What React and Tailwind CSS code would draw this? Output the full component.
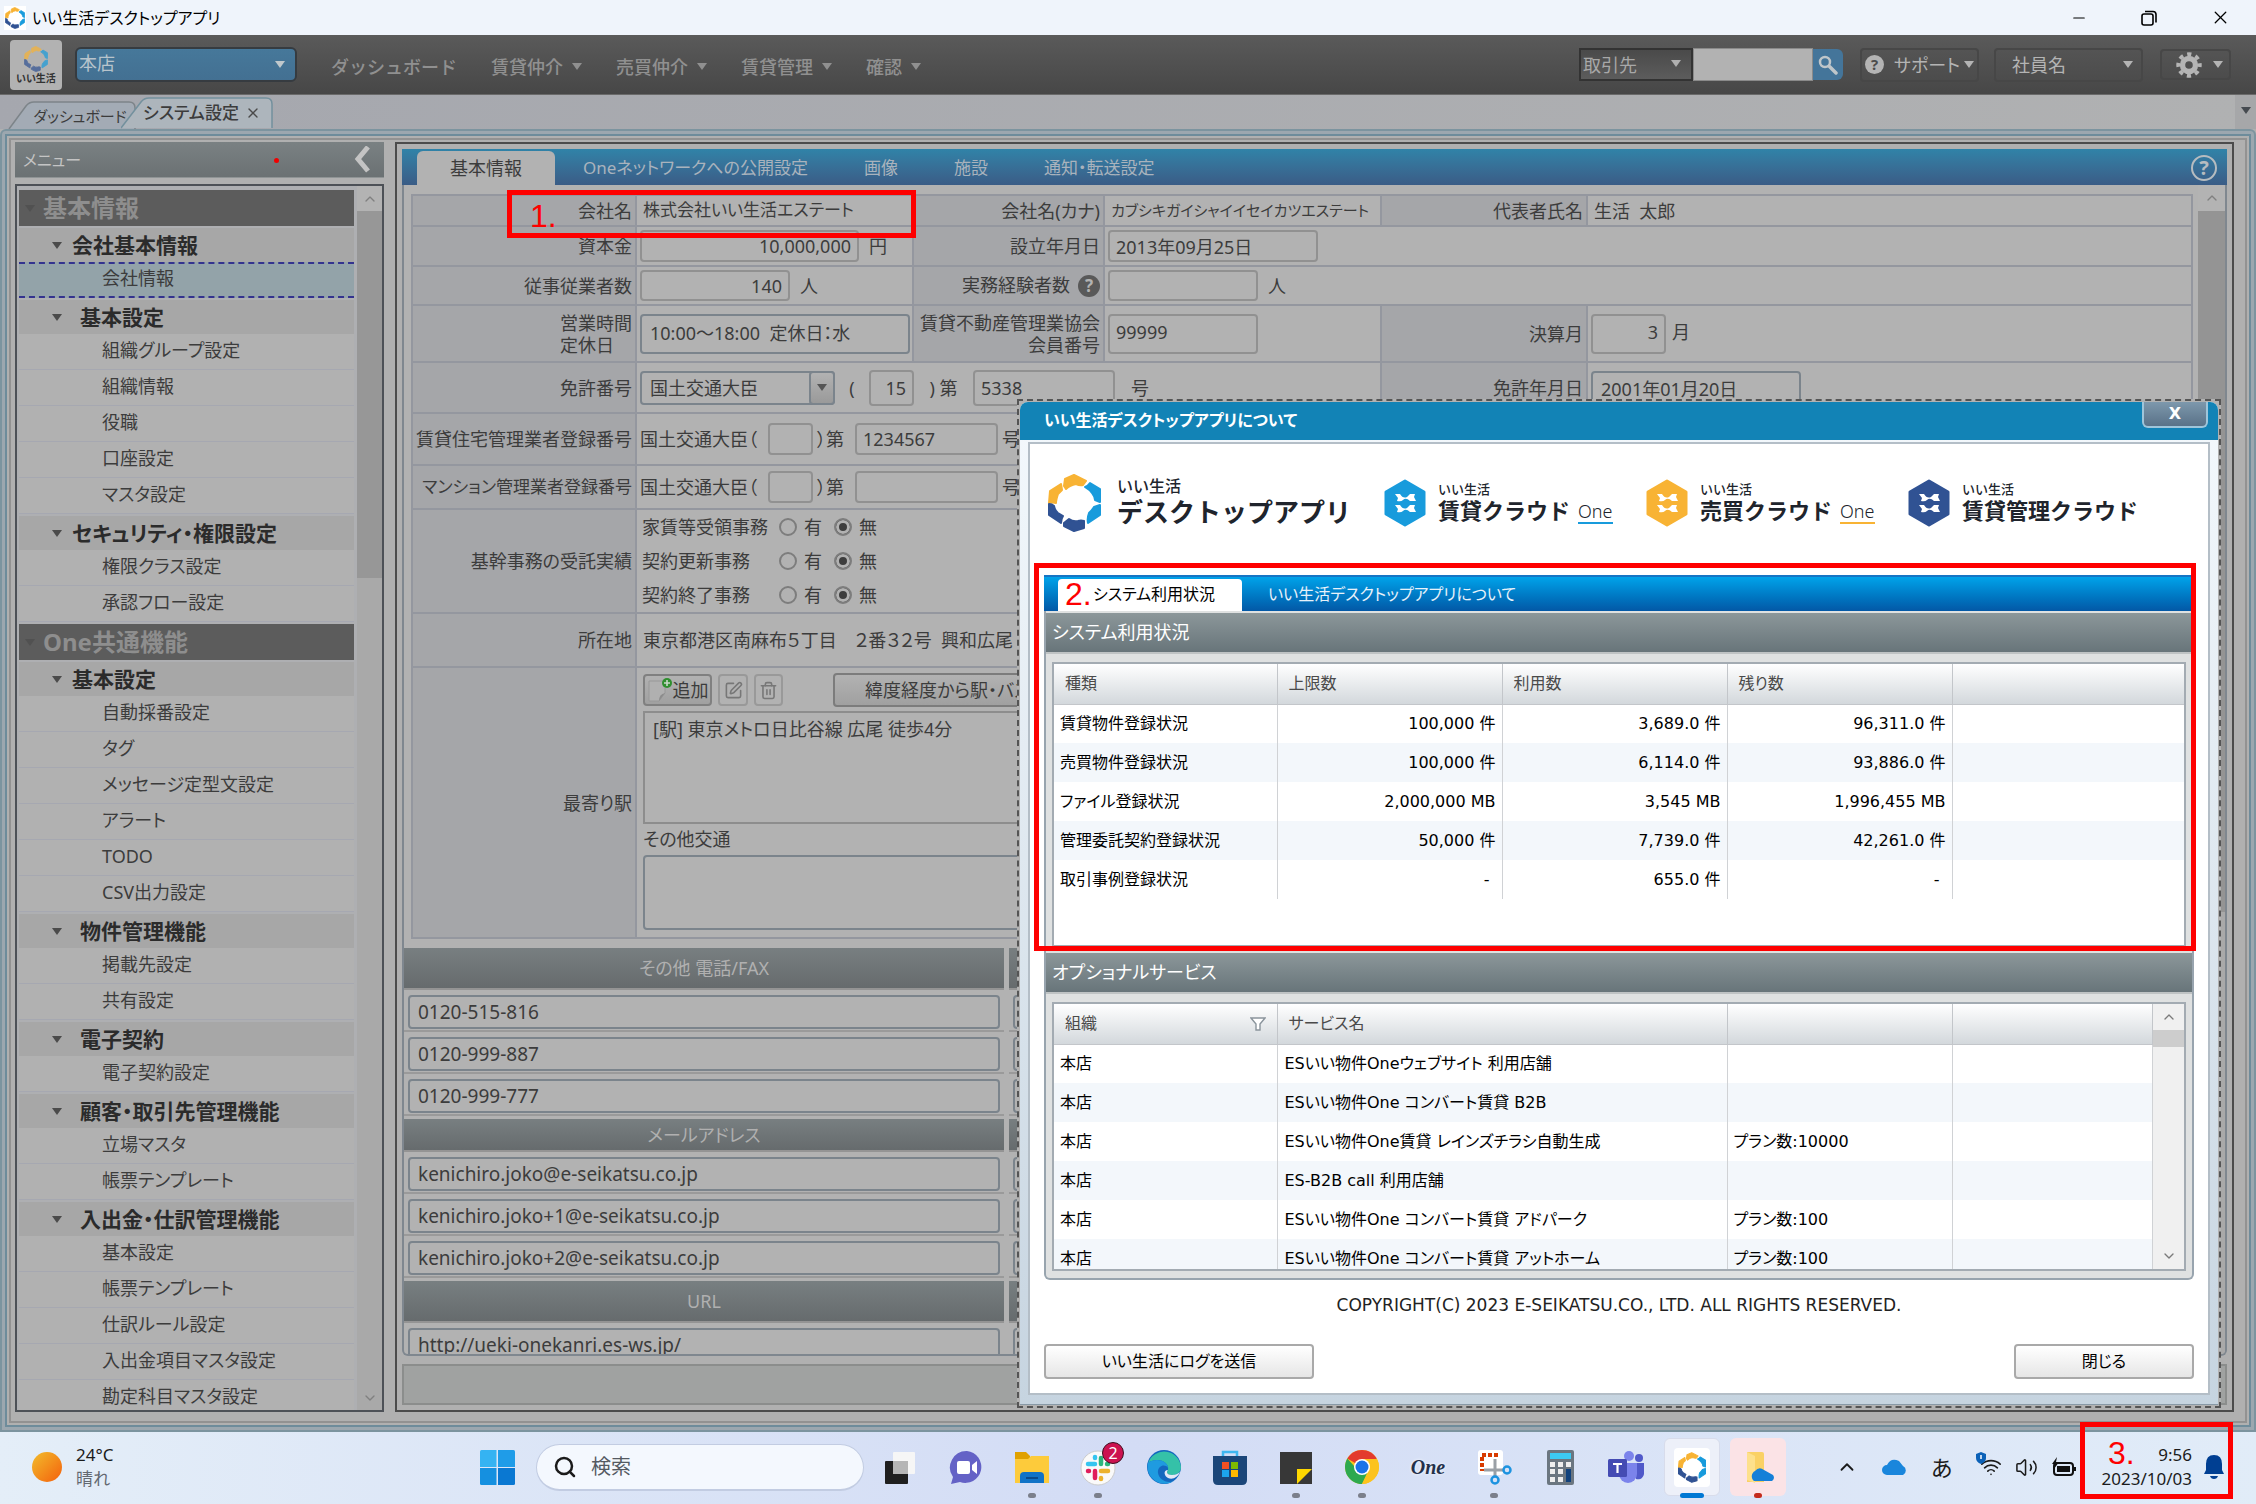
import { useState } from 'react';
import { Search, Minus, X, ChevronUp, ChevronDown, Trash2, SquarePen, Volume2, Wifi } from 'lucide-react';

const NAV = [
  { label: 'ダッシュボード' },
  { label: '賃貸仲介', menu: true },
  { label: '売買仲介', menu: true },
  { label: '賃貸管理', menu: true },
  { label: '確認', menu: true },
];

const MENU = [
  {
    title: '基本情報',
    groups: [
      { title: '会社基本情報', items: ['会社情報'] },
      { title: '基本設定', deep: true, items: ['組織グループ設定', '組織情報', '役職', '口座設定', 'マスタ設定'] },
      { title: 'セキュリティ・権限設定', items: ['権限クラス設定', '承認フロー設定'] },
    ],
  },
  {
    title: 'One共通機能',
    groups: [
      {
        title: '基本設定',
        items: ['自動採番設定', 'タグ', 'メッセージ定型文設定', 'アラート', 'TODO', 'CSV出力設定'],
      },
      { title: '物件管理機能', deep: true, items: ['掲載先設定', '共有設定'] },
      { title: '電子契約', deep: true, items: ['電子契約設定'] },
      { title: '顧客・取引先管理機能', deep: true, items: ['立場マスタ', '帳票テンプレート'] },
      {
        title: '入出金・仕訳管理機能',
        deep: true,
        items: ['基本設定', '帳票テンプレート', '仕訳ルール設定', '入出金項目マスタ設定', '勘定科目マスタ設定'],
      },
    ],
  },
];

const TABS = ['基本情報', 'Oneネットワークへの公開設定', '画像', '施設', '通知・転送設定'];

const USAGE = [
  ['賃貸物件登録状況', '100,000 件', '3,689.0 件', '96,311.0 件'],
  ['売買物件登録状況', '100,000 件', '6,114.0 件', '93,886.0 件'],
  ['ファイル登録状況', '2,000,000 MB', '3,545 MB', '1,996,455 MB'],
  ['管理委託契約登録状況', '50,000 件', '7,739.0 件', '42,261.0 件'],
  ['取引事例登録状況', '-', '655.0 件', '-'],
];

const SERVICES = [
  ['本店', 'ESいい物件Oneウェブサイト 利用店舗', ''],
  ['本店', 'ESいい物件One コンバート賃貸 B2B', ''],
  ['本店', 'ESいい物件One賃貸 レインズチラシ自動生成', 'プラン数:10000'],
  ['本店', 'ES-B2B call 利用店舗', ''],
  ['本店', 'ESいい物件One コンバート賃貸 アドパーク', 'プラン数:100'],
  ['本店', 'ESいい物件One コンバート賃貸 アットホーム', 'プラン数:100'],
];

const CONTACTS = [
  { title: 'その他 電話/FAX', tall: true, values: ['0120-515-816', '0120-999-887', '0120-999-777'] },
  {
    title: 'メールアドレス',
    values: ['kenichiro.joko@e-seikatsu.co.jp', 'kenichiro.joko+1@e-seikatsu.co.jp', 'kenichiro.joko+2@e-seikatsu.co.jp'],
  },
  { title: 'URL', tall: true, values: ['http://ueki-onekanri.es-ws.jp/'] },
];

function Caret({ className = '' }) {
  return (
    <svg viewBox="0 0 10 7" className={`w-[10px] h-[7px] shrink-0 ${className}`}>
      <path d="M0 0h10L5 7z" fill="currentColor" />
    </svg>
  );
}

function RingLogo({ className }) {
  return (
    <svg viewBox="0 0 53 58" className={className}>
      <g strokeLinejoin="round" strokeWidth="2">
        <g fill="#f8b334" stroke="#f8b334">
          <path d="M17 5 26 1l12 6-3 4q-3 1-7-1-6 1-10 5l-2-3z" />
          <path d="M13 10 2 17 1 29q4-1 7 0 0-3 2-9l4-4z" />
        </g>
        <g fill="#189bdc" stroke="#189bdc">
          <path d="M37 13q3-1 5-4l10 6v13l-5-2q0-3-3-7-2-3-7-6z" />
          <path d="M52 31v10l-12 8q-1-5 1-10 4-4 5-6z" />
        </g>
        <g fill="#305293" stroke="#305293">
          <path d="M1 30q3 0 5 2 1 5 4 7l5 3q-2 3-2 7L1 41z" />
          <path d="M16 49l5-4q4 3 9 2 3-1 6 0v7l-10 3-10-5z" />
        </g>
      </g>
    </svg>
  );
}

function HexLogo({ color }) {
  return (
    <svg viewBox="0 0 42 48" className="w-[42px] h-[48px] shrink-0">
      <path d="M21 2 40 13v22L21 46 2 35V13z" fill={color} stroke={color} strokeWidth="3" strokeLinejoin="round" />
      <path d="M11 15h5q3 5 7 3l3-3h5l-1 3 2 4h-6q-4-4-7-1-2 2-6 1l1-3z" fill="#fff" />
      <path d="M11 26h5q3 5 7 3l3-3h5l-1 3 2 4h-6q-4-4-7-1-2 2-6 1l1-3z" fill="#fff" />
    </svg>
  );
}

function QuestionMark({ className, bg, fg }) {
  return (
    <span className={`inline-flex items-center justify-center rounded-full font-bold leading-none ${bg} ${fg} ${className}`}>
      ?
    </span>
  );
}

function TitleBar() {
  return (
    <header className="h-[35px] shrink-0 flex items-center bg-[#eff4fb] text-black">
      <div className="flex items-center gap-1.5 pl-1 text-base">
        <span className="bg-white p-px">
          <RingLogo className="w-5 h-[22px]" />
        </span>
        いい生活デスクトップアプリ
      </div>
      <div className="ml-auto flex">
        <button aria-label="最小化" className="w-[70px] flex justify-center items-center">
          <Minus size={18} strokeWidth={1.5} />
        </button>
        <button aria-label="元に戻す" className="w-[70px] flex justify-center items-center">
          <svg width="16" height="16" viewBox="0 0 16 16" fill="none" stroke="#000" strokeWidth="1.6">
            <rect x="1" y="4" width="11" height="11" rx="2" />
            <path d="M4 1.500h8a3 3 0 0 1 3 3v8" />
          </svg>
        </button>
        <button aria-label="閉じる" className="w-[72px] flex justify-center items-center">
          <X size={21} strokeWidth={1.5} />
        </button>
      </div>
    </header>
  );
}

const darkButton =
  'flex items-center rounded-sm border-2 border-[#474747] bg-linear-to-b from-[#545454] to-[#4c4c4c] text-[#b4b4b4] text-lg';

function Toolbar() {
  return (
    <div className="h-[60px] shrink-0 flex items-center bg-linear-to-b from-[#5a5a5a] to-[#474747] border-b border-[#6a6a6a] pl-[10px] pr-[25px]">
      <div className="w-[52px] h-[50px] shrink-0 bg-[#b2b2b2] rounded-sm flex flex-col items-center justify-center">
        <RingLogo className="w-6 h-[26px] opacity-70" />
        <span className="text-[10px] leading-3 font-bold text-[#333]">いい生活</span>
      </div>
      <div className="relative ml-[13px] w-[222px] h-[35px]">
        <select
          aria-label="店舗"
          className="appearance-none w-full h-full pl-0.5 pb-1 rounded-md border-2 border-[#363b40] bg-linear-to-b from-[#46789a] to-[#437092] text-[#b8c4cc] text-lg leading-6"
        >
          <option>本店</option>
        </select>
        <Caret className="absolute right-3 top-[14px] text-[#c0c8cc]" />
      </div>
      <nav className="flex gap-[34px] ml-[34px] pt-1 text-lg text-[#909090] font-medium [font-feature-settings:normal]">
        {NAV.map((n) => (
          <button key={n.label} className="flex items-center gap-[9px] whitespace-nowrap">
            {n.label}
            {n.menu && <Caret />}
          </button>
        ))}
      </nav>

      <div className="ml-auto flex items-center h-[33px]">
        <div className="relative w-[114px] h-full">
          <select
            aria-label="検索対象"
            className="appearance-none w-full h-full pl-0.5 border-2 border-[#333] bg-linear-to-b from-[#4a4a4a] to-[#5c5c5c] text-[#a8a8a8] text-lg leading-6"
          >
            <option>取引先</option>
          </select>
          <Caret className="absolute right-3 top-3 text-[#b0b0b0]" />
        </div>
        <input aria-label="検索キーワード" className="w-[120px] h-full bg-[#b2b2b2] border border-[#8a8a8a]" />
        <button aria-label="検索" className="w-[30px] h-[31px] rounded-r-md bg-[#44759a] text-[#bfc6ca] flex items-center justify-center">
          <svg width="20" height="20" viewBox="0 0 20 20" fill="none" stroke="currentColor" strokeLinecap="round">
            <circle cx="7" cy="7" r="5" strokeWidth="2.5" />
            <path d="M11.500 11.500 18 18" strokeWidth="3.5" />
          </svg>
        </button>
        <button className={`${darkButton} ml-[17px] w-[119px] h-[34px] justify-center gap-1`}>
          <QuestionMark className="w-[19px] h-[19px] text-[15px] mr-1.5" bg="bg-[#b4b4b4]" fg="text-[#4c4c4c]" />
          サポート
          <Caret />
        </button>
        <button className={`${darkButton} ml-[15px] w-[149px] h-[34px] justify-between pl-4 pr-2`}>
          社員名
          <Caret />
        </button>
        <button aria-label="設定" className={`${darkButton} ml-[17px] w-[71px] h-[31px] justify-between pl-3.5 pr-1.5`}>
          <svg viewBox="0 0 24 24" className="w-[26px] h-[26px]" fill="none" stroke="currentColor">
            <circle cx="12" cy="12" r="6" strokeWidth="5" />
            <circle cx="12" cy="12" r="10" strokeWidth="3.500" strokeDasharray="3.900 3.954" strokeDashoffset="2" />
          </svg>
          <Caret />
        </button>
      </div>
    </div>
  );
}

function PageTabs() {
  return (
    <div className="h-[34px] shrink-0 flex items-end bg-linear-to-r from-[#a5a7ae] to-[#b0b1b2] text-lg text-[#3c3c3c] pl-[8px]">
      <button className="relative w-[128px] h-[28px]">
        <svg viewBox="0 0 128 28" className="absolute inset-0 w-full h-full" preserveAspectRatio="none">
          <path d="M1 28 18 5q3-4 8-4h95q6 0 6 6v21" fill="#a3abb5" stroke="#7d8489" strokeWidth="1.500" />
        </svg>
        <span className="relative pl-[16px] text-[15px] whitespace-nowrap">ダッシュボード</span>
      </button>
      <div className="relative -ml-[15px] w-[152px] h-[32px] flex items-center pl-[22px]">
        <svg viewBox="0 0 152 32" className="absolute inset-0 w-full h-full" preserveAspectRatio="none">
          <path d="M0 31 20 5q3-4 8-4h117q6 0 6 6v24" fill="#adb5bc" stroke="#73909d" strokeWidth="1.500" />
        </svg>
        <button className="relative text-[17px] font-medium whitespace-nowrap">システム設定</button>
        <button aria-label="タブを閉じる" className="relative ml-1.5 text-[#4a4a4a]">
          <X size={16} strokeWidth={2} />
        </button>
      </div>
      <button aria-label="タブ一覧" className="ml-auto w-[21px] h-full bg-[#a6a7a9] flex items-center justify-center text-[#454a50]">
        <Caret className="mb-1" />
      </button>
    </div>
  );
}

function Sidebar() {
  const [active, setActive] = useState('会社情報');
  return (
    <aside className="w-[369px] shrink-0 flex flex-col gap-[6px] min-h-0">
      <div className="relative h-9 shrink-0 flex items-center justify-between pl-2 pr-[14px] bg-linear-to-b from-[#7a8183] to-[#6b7173] border-b border-[#8f9495] text-[#c4c4c4] text-base">
        メニュー
        <span className="absolute left-[259px] top-4 w-[5px] h-[5px] rounded-full bg-[#f00000]" />
        <button aria-label="メニューを閉じる" className="text-[#c4c4c4]">
          <svg width="17" height="27" viewBox="0 0 17 27" fill="none" stroke="currentColor" strokeWidth="5">
            <path d="M15 1 5 13l10 12" />
          </svg>
        </button>
      </div>
      <div className="flex-1 min-h-0 flex border-2 border-[#4d5157] bg-[#aeafb2]">
        <div className="flex-1 min-w-0 overflow-hidden pl-0.5 pt-1 pr-[3px] space-y-0.5">
          {MENU.map((section) => (
            <div key={section.title}>
              <h2 className="h-9 mb-0.5 flex items-center gap-2 pl-1.5 bg-[#5c5c5c] text-[#8e8e8e] text-2xl font-bold">
                <Caret className="text-[#515151]" />
                {section.title}
              </h2>
              {section.groups.map((g) => (
                <div key={g.title}>
                  <h3
                    className={`h-[34px] mt-0.5 flex items-center pl-[33px] bg-[#a7a7a7] text-[#2b2b2b] text-[21px] leading-6 font-bold whitespace-nowrap ${
                      g.deep ? 'gap-[18px]' : 'gap-[10px]'
                    }`}
                  >
                    <Caret className="text-[#4b4b4b]" />
                    {g.title}
                  </h3>
                  <ul>
                    {g.items.map((item) => (
                      <li key={item}>
                        <a
                          href="#"
                          onClick={() => setActive(item)}
                          className={`h-9 flex items-center pl-[83px] pb-1 text-lg leading-6 text-[#3c3c3c] ${
                            active === item
                              ? 'bg-[#93a3a9] border-y-2 border-dashed border-[#33338f]'
                              : 'bg-[#b1b1b1] border-b border-[#a6a8b1]'
                          }`}
                        >
                          {item}
                        </a>
                      </li>
                    ))}
                  </ul>
                </div>
              ))}
            </div>
          ))}
        </div>
        <div className="w-[25px] shrink-0 flex flex-col bg-[#a9a9a9] text-[#808080]">
          <span className="h-[25px] flex items-center justify-center bg-[#b3b3b3]">
            <ChevronUp size={16} />
          </span>
          <span className="h-[30%] bg-[#979797]" />
          <span className="mt-auto h-[25px] flex items-center justify-center">
            <ChevronDown size={16} />
          </span>
        </div>
      </div>
    </aside>
  );
}

const field = 'bg-[#b2b2b2] border-2 border-[#919191] rounded-sm px-1.5 text-lg leading-6 text-[#3c3c3c]';
const blueField = 'bg-[#b2b2b2] border-2 border-[#7b848c] rounded-sm px-2 leading-6 text-[#3c3c3c]';

function Th({ children, htmlFor, small }) {
  return (
    <th
      className={`border-2 border-[#94979f] bg-[#a5a6a9] px-[3px] text-right font-normal whitespace-nowrap leading-[22px] ${
        small ? 'text-[17px]' : ''
      }`}
    >
      <label htmlFor={htmlFor}>{children}</label>
    </th>
  );
}

function Td({ children, span, className = 'px-[3px]' }) {
  return (
    <td colSpan={span} className={`border-2 border-[#94979f] ${className}`}>
      {children}
    </td>
  );
}

function YesNo({ label, name }) {
  return (
    <fieldset className="flex items-center h-[34px]">
      <legend className="float-left w-[139px] pl-0.5">{label}</legend>
      {['有', '無'].map((v) => (
        <label key={v} className="flex items-center gap-[7px] w-[55px]">
          <input
            type="radio"
            name={name}
            defaultChecked={v === '無'}
            className="appearance-none w-[18px] h-[18px] rounded-full border-2 border-[#7d7d7d] checked:bg-[#3d3d3d] checked:shadow-[inset_0_0_0_3px_#b2b2b2]"
          />
          {v}
        </label>
      ))}
    </fieldset>
  );
}

function RegistrationNumber({ id, value }) {
  return (
    <div className="flex items-center">
      <span className="w-[128px] shrink-0 whitespace-nowrap">国土交通大臣（</span>
      <input id={id} className={`${field} w-[45px] h-8 shrink-0`} />
      <span className="w-[42px] shrink-0 whitespace-nowrap pl-1">
        ）第
      </span>
      <input aria-label="登録番号" defaultValue={value} className={`${field} w-[143px] h-8`} />
      <span className="pl-1">号</span>
    </div>
  );
}

function CompanyForm() {
  return (
    <div className="relative mt-[9px] ml-[7px] mr-[5px]">
      <table className="w-full table-fixed border-collapse text-lg text-[#3c3c3c]">
        <colgroup>
          <col className="w-[224px]" />
          <col className="w-[277px]" />
          <col className="w-[191px]" />
          <col className="w-[277px]" />
          <col className="w-[206px]" />
          <col />
        </colgroup>
        <tbody>
          <tr className="h-[31px]">
            <Th>会社名</Th>
            <Td className="pl-[6px] text-[17px]">株式会社いい生活エステート</Td>
            <Th>会社名(カナ)</Th>
            <Td className="pl-[6px] text-[15px] whitespace-nowrap">カブシキガイシャイイセイカツエステート</Td>
            <Th>代表者氏名</Th>
            <Td className="pl-[6px]">生活&nbsp; 太郎</Td>
          </tr>
          <tr className="h-10">
            <Th htmlFor="capital">資本金</Th>
            <Td>
              <input id="capital" defaultValue="10,000,000" className={`${field} w-[219px] h-8 text-right`} />
              <span className="pl-[10px]">円</span>
            </Td>
            <Th htmlFor="founded">設立年月日</Th>
            <Td span={3}>
              <input id="founded" defaultValue="2013年09月25日" className={`${field} w-[210px] h-8`} />
            </Td>
          </tr>
          <tr className="h-[39px]">
            <Th htmlFor="staff">従事従業者数</Th>
            <Td>
              <input id="staff" defaultValue="140" className={`${field} w-[150px] h-[31px] text-right`} />
              <span className="pl-[10px]">人</span>
            </Td>
            <Th htmlFor="veterans">
              実務経験者数
              <QuestionMark className="w-[22px] h-[22px] text-[17px] ml-2" bg="bg-[#595959]" fg="text-[#b2b2b2]" />
            </Th>
            <Td span={3}>
              <input id="veterans" className={`${field} w-[150px] h-[31px]`} />
              <span className="pl-[10px]">人</span>
            </Td>
          </tr>
          <tr className="h-[57px]">
            <Th htmlFor="hours">
              <span className="inline-block text-left">
                営業時間
                <br />
                定休日
              </span>
            </Th>
            <Td>
              <input id="hours" defaultValue="10:00～18:00  定休日：水" className={`${blueField} text-lg w-[270px] h-10 pb-1`} />
            </Td>
            <Th htmlFor="member">
              賃貸不動産管理業協会
              <br />
              会員番号
            </Th>
            <Td>
              <input id="member" defaultValue="99999" className={`${field} w-[150px] h-10 pb-1`} />
            </Td>
            <Th htmlFor="closing">決算月</Th>
            <Td>
              <input id="closing" defaultValue="3" className={`${field} w-[75px] h-10 pb-1 text-right`} />
              <span className="pl-1.5">月</span>
            </Td>
          </tr>
          <tr className="h-[51px]">
            <Th htmlFor="license">免許番号</Th>
            <Td span={3}>
              <div className="flex items-center">
                <div className="relative w-[195px] h-[34px]">
                  <select id="license" className={`${blueField} text-lg appearance-none w-full h-full`}>
                    <option>国土交通大臣</option>
                  </select>
                  <span className="absolute right-0 top-0 w-[26px] h-full rounded-sm border-2 border-[#7b848c] bg-linear-to-b from-[#b2b2b2] to-[#9a9a9a] flex items-center justify-center pointer-events-none">
                    <Caret className="text-[#555]" />
                  </span>
                </div>
                <span className="w-[34px] text-center">(</span>
                <input aria-label="免許更新回数" defaultValue="15" className={`${field} w-[45px] h-9 text-right`} />
                <span className="w-[59px] text-center whitespace-nowrap">) 第</span>
                <input aria-label="免許番号" defaultValue="5338" className={`${field} w-[142px] h-9`} />
                <span className="pl-4">号</span>
              </div>
            </Td>
            <Th htmlFor="licensed">免許年月日</Th>
            <Td>
              <input id="licensed" defaultValue="2001年01月20日" className={`${blueField} text-lg w-[210px] h-[34px]`} />
            </Td>
          </tr>
          <tr className="h-[52px]">
            <Th htmlFor="rental-no">賃貸住宅管理業者登録番号</Th>
            <Td span={5}>
              <RegistrationNumber id="rental-no" value="1234567" />
            </Td>
          </tr>
          <tr className="h-[44px]">
            <Th htmlFor="condo-no" small>
              マンション管理業者登録番号
            </Th>
            <Td span={5}>
              <RegistrationNumber id="condo-no" value="" />
            </Td>
          </tr>
          <tr className="h-[104px]">
            <Th>基幹事務の受託実績</Th>
            <Td span={5} className="pl-[3px]">
              <YesNo label="家賃等受領事務" name="rent" />
              <YesNo label="契約更新事務" name="renewal" />
              <YesNo label="契約終了事務" name="termination" />
            </Td>
          </tr>
          <tr className="h-[54px]">
            <Th>所在地</Th>
            <Td span={5} className="pl-[6px]">
              東京都港区南麻布５丁目　２番３２号&nbsp; 興和広尾
            </Td>
          </tr>
          <tr className="h-[271px]">
            <Th htmlFor="transit">最寄り駅</Th>
            <Td span={5} className="align-top pt-[5px] pl-[6px] pr-[3px]">
              <div className="flex items-center">
                <button className="w-[69px] h-8 flex items-center justify-center rounded-sm border-2 border-[#808080] bg-linear-to-b from-[#b2b2b2] to-[#a0a0a0] whitespace-nowrap">
                  <svg width="26" height="26" viewBox="0 0 26 26" className="shrink-0">
                    <path d="M2 4h16v12l-6 8H2z" fill="#b0b0b0" stroke="#989898" />
                    <path d="M12 24q0-7 6-8z" fill="#8c8c8c" />
                    <circle cx="20" cy="6" r="5" fill="#2f8f2f" />
                    <path d="M20 3v6M17 6h6" stroke="#c8d8c8" strokeWidth="1.600" />
                  </svg>
                  追加
                </button>
                <button aria-label="編集" className="ml-1.5 w-[30px] h-8 flex items-center justify-center rounded-sm border-2 border-[#999] text-[#777]">
                  <SquarePen size={19} />
                </button>
                <button aria-label="削除" className="ml-1.5 w-[29px] h-8 flex items-center justify-center rounded-sm border-2 border-[#999] text-[#777]">
                  <Trash2 size={19} />
                </button>
                <button className="ml-[50px] w-[340px] h-[34px] pl-[30px] text-left rounded-sm border-2 border-[#7c7c7c] bg-linear-to-b from-[#b2b2b2] to-[#a0a0a0] whitespace-nowrap">
                  緯度経度から駅・バス
                </button>
              </div>
              <div className="mt-1 h-[113px] border-2 border-[#8d8d8d] px-2 pt-0.5">[駅] 東京メトロ日比谷線 広尾 徒歩4分</div>
              <label htmlFor="transit" className="block h-[31px] leading-[30px]">
                その他交通
              </label>
              <textarea id="transit" className={`${blueField} text-lg block w-full h-[75px] resize-none`} />
            </Td>
          </tr>
        </tbody>
      </table>
      {/* callout 1 */}
      <div className="absolute left-[96px] -top-1 w-[409px] h-[48px] border-[5px] border-[#fe0000] pl-[18px] text-[32px] leading-[42px] text-[#fe0000] font-['Liberation_Sans_Narrow','Liberation_Sans',sans-serif] pointer-events-none">
        1.
      </div>
    </div>
  );
}

function ContactColumn({ wide, filled }) {
  return (
    <div className={`space-y-[3px] ${wide ? 'flex-1 min-w-0' : 'w-[600px] shrink-0'}`}>
      {CONTACTS.map((c) => (
        <section key={c.title}>
          <h3
            className={`flex items-center justify-center bg-linear-to-b from-[#787f81] to-[#666b6d] text-[#b0b0b0] text-lg border-b-2 border-[#949494] ${
              c.tall ? 'h-[42px]' : 'h-[33px]'
            }`}
          >
            {filled ? c.title : ''}
          </h3>
          {c.values.map((v) => (
            <div key={v} className="h-[42px] border-b-2 border-[#9a9a9a] px-1 pt-[5px]">
              <input aria-label={c.title} defaultValue={filled ? v : ''} className={`${blueField} text-[19px] w-full h-[34px]`} />
            </div>
          ))}
        </section>
      ))}
    </div>
  );
}

function MainPanel() {
  const [tab, setTab] = useState(TABS[0]);
  return (
    <main className="flex-1 min-w-0 flex flex-col border-2 border-[#4c4c4c] pt-[5px] px-[5px] pb-[5px]">
      <div className="h-9 shrink-0 flex items-end bg-linear-to-b from-[#3083a8] to-[#3a5c86] pl-[15px] pr-[10px] text-[17px]">
        {TABS.map((t) => (
          <button
            key={t}
            onClick={() => setTab(t)}
            className={
              t === tab
                ? 'w-[138px] h-[34px] rounded-t-md bg-[#b2b2b2] text-[#3c3c3c] text-lg'
                : 'h-[34px] px-[28px] text-[#a9b3bd] whitespace-nowrap'
            }
          >
            {t}
          </button>
        ))}
        <button aria-label="ヘルプ" className="ml-auto mb-1">
          <QuestionMark className="w-[26px] h-[26px] text-xl border-2 border-[#b6bcc0]" bg="bg-transparent" fg="text-[#b6bcc0]" />
        </button>
      </div>
      <div className="flex-1 min-h-0 flex border-2 border-t-0 border-[#7f878f] rounded-b-md overflow-hidden bg-[#b2b2b2]">
        <div className="flex-1 min-w-0">
          <CompanyForm />
          <div className="mt-[9px] flex gap-[5px]">
            <ContactColumn filled />
            <ContactColumn wide />
          </div>
        </div>
        <div className="w-[27px] shrink-0 flex flex-col bg-[#a9a9a9] text-[#808080]">
          <span className="h-[26px] flex items-center justify-center bg-[#b3b3b3]">
            <ChevronUp size={16} />
          </span>
          <span className="h-3/5 bg-[#949494]" />
        </div>
      </div>
      <div className="mt-2 h-[41px] shrink-0 bg-[#a0a2a1] border-2 border-[#8b8d8c]" />
    </main>
  );
}

function ProductName({ color, name, one }) {
  return (
    <div className="flex items-center gap-3">
      <HexLogo color={color} />
      <div className="text-[#20242c] whitespace-nowrap pb-0.5 [font-feature-settings:normal]">
        <div className="text-[13px] leading-5 font-medium">いい生活</div>
        <div className="flex items-end gap-2 text-[22px] leading-6 font-bold">
          {name}
          {one && (
            <span
              className="font-light text-lg leading-[22px] border-b-2 font-['Noto_Sans',sans-serif]"
              style={{ borderColor: color }}
            >
              One
            </span>
          )}
        </div>
      </div>
    </div>
  );
}

const gridHead = 'border-r border-b border-[#c3c6ca] px-[11px] text-left font-normal text-[#4a4a4a]';
const gridCell = 'border-r border-[#d0d2d5] whitespace-nowrap';

function SectionTitle({ children }) {
  return (
    <h3 className="h-[41px] pl-1.5 flex items-center bg-linear-to-b from-[#8c979a] to-[#68757a] border-b-2 border-[#bfc3c4] text-white text-lg">
      {children}
    </h3>
  );
}

function AboutDialog() {
  return (
    <div
      role="dialog"
      aria-label="いい生活デスクトップアプリについて"
      className="absolute left-[1017px] top-[399px] right-[35px] border-2 border-dashed border-[#555] p-px bg-[#b2b2b2] text-base text-black font-['DejaVu_Sans','Noto_Sans_CJK_JP',sans-serif]"
    >
      <div className="rounded-t-lg bg-linear-to-b from-[#f4f9fd] to-[#c6d4e0] border-b border-[#8899a6] px-2 pb-[9px]">
        <div className="-mx-2 mb-0.5 h-[38px] flex items-center pl-6 rounded-t-lg bg-[#1283b6] text-white text-base font-bold">
          いい生活デスクトップアプリについて
          <button
            aria-label="閉じる"
            className="self-start ml-auto mr-2.5 w-[66px] h-[26px] rounded-b-md border-2 border-t-0 border-[#9fc5da] bg-linear-to-b from-[#7d98ac] to-[#5a7288] text-white flex items-center justify-center font-bold leading-5"
          >
            X
          </button>
        </div>
        <div className="border-2 border-[#b4bec7] bg-white pt-[27px] pb-[14px] px-3.5">
          <div className="flex items-center h-[64px] pl-1 mb-[40px]">
            <div className="w-[336px] flex items-center gap-4">
              <RingLogo className="w-[53px] h-[58px] shrink-0" />
              <div className="text-[#20242c] whitespace-nowrap [font-feature-settings:normal]">
                <div className="text-base leading-5 font-medium">いい生活</div>
                <div className="text-[26px] leading-8 font-bold">デスクトップアプリ</div>
              </div>
            </div>
            <div className="w-[262px]">
              <ProductName color="#189bdc" name="賃貸クラウド" one />
            </div>
            <div className="w-[262px]">
              <ProductName color="#f8b334" name="売買クラウド" one />
            </div>
            <ProductName color="#305293" name="賃貸管理クラウド" />
          </div>

          <div className="relative border-2 border-t-0 border-[#98a4ae] rounded-b-md bg-[#dfe1e1]">
            <div className="-mx-0.5 mb-0.5 h-9 flex items-end pl-3.5 bg-linear-to-b from-[#00a3ea] to-[#0358a6] border-t-2 border-[#1675c4]">
              <button className="w-[184px] h-8 rounded-t-sm bg-white text-black text-base pl-2">システム利用状況</button>
              <button className="h-8 pl-[26px] text-[#e8f2fa] text-base">いい生活デスクトップアプリについて</button>
            </div>
            <SectionTitle>システム利用状況</SectionTitle>
            <div className="mx-[6px] mt-2 mb-[6px] h-[285px] bg-white border-2 border-[#a3abb2] overflow-hidden">
              <table className="w-full table-fixed border-collapse">
                <colgroup>
                  <col className="w-[223px]" />
                  <col className="w-[225px]" />
                  <col className="w-[225px]" />
                  <col className="w-[225px]" />
                  <col />
                </colgroup>
                <thead>
                  <tr className="h-10 bg-linear-to-b from-white to-[#d3d8dc]">
                    {['種類', '上限数', '利用数', '残り数', ''].map((h) => (
                      <th key={h} className={`${gridHead} last:border-r-0`}>
                        {h}
                      </th>
                    ))}
                  </tr>
                </thead>
                <tbody>
                  {USAGE.map(([name, ...nums]) => (
                    <tr key={name} className="h-[39px] even:bg-[#f3f7fb]">
                      <td className={`${gridCell} px-1.5`}>{name}</td>
                      {nums.map((n, i) => (
                        <td key={i} className={`${gridCell} text-right ${n === '-' ? 'pr-3' : 'pr-1.5'}`}>
                          {n}
                        </td>
                      ))}
                      <td />
                    </tr>
                  ))}
                </tbody>
              </table>
            </div>
            <SectionTitle>オプショナルサービス</SectionTitle>
            <div className="mx-[6px] mt-2 mb-[7px] h-[269px] flex bg-white border-2 border-[#a3abb2] overflow-hidden">
              <table className="flex-1 table-fixed border-collapse self-start">
                <colgroup>
                  <col className="w-[223px]" />
                  <col className="w-[450px]" />
                  <col className="w-[225px]" />
                  <col />
                </colgroup>
                <thead>
                  <tr className="h-10 bg-linear-to-b from-white to-[#d3d8dc]">
                    <th className={gridHead}>
                      <span className="flex items-center justify-between">
                        組織
                        <svg width="16" height="14" viewBox="0 0 16 14" fill="#fff" stroke="#8a949c" strokeWidth="1.400">
                          <path d="M1 1h14L10 7v6H6V7z" />
                        </svg>
                      </span>
                    </th>
                    <th className={gridHead}>サービス名</th>
                    <th className={gridHead} />
                    <th className={gridHead} />
                  </tr>
                </thead>
                <tbody>
                  {SERVICES.map(([org, name, plan]) => (
                    <tr key={name} className="h-[39px] even:bg-[#f3f7fb]">
                      <td className={`${gridCell} px-1.5`}>{org}</td>
                      <td className={`${gridCell} px-[7px]`}>{name}</td>
                      <td className={`${gridCell} px-1.5`}>{plan}</td>
                      <td className={gridCell} />
                    </tr>
                  ))}
                </tbody>
              </table>
              <div className="w-[31px] shrink-0 flex flex-col bg-[#f0f0f0] text-[#7a7a7a]">
                <span className="h-[26px] flex items-center justify-center">
                  <ChevronUp size={16} />
                </span>
                <span className="h-[17px] bg-[#cdcdcd]" />
                <span className="mt-auto h-[26px] flex items-center justify-center">
                  <ChevronDown size={16} />
                </span>
              </div>
            </div>
            {/* callout 2 */}
            <div className="absolute -left-3 -right-1 -top-3 h-[388px] border-[5px] border-[#fe0000] pl-[26px] pt-[6px] text-[32px] leading-10 text-[#fe0000] font-['Liberation_Sans_Narrow','Liberation_Sans',sans-serif] pointer-events-none">
              2.
            </div>
          </div>

          <p className="mt-[13px] mb-[27px] leading-6 text-center text-[17px] text-[#222]">
            COPYRIGHT(C) 2023 E-SEIKATSU.CO., LTD. ALL RIGHTS RESERVED.
          </p>
          <div className="flex justify-between">
            <button className="w-[270px] h-[35px] border-2 border-[#a9a9a9] rounded-sm bg-linear-to-b from-white to-[#e6e6e6]">
              いい生活にログを送信
            </button>
            <button className="w-[180px] h-[35px] border-2 border-[#a9a9a9] rounded-sm bg-linear-to-b from-white to-[#e6e6e6]">閉じる</button>
          </div>
        </div>
      </div>
    </div>
  );
}

const ICONS = [
  {
    name: 'タスクビュー',
    art: (
      <>
        <rect x="3" y="12" width="23" height="23" rx="1" fill="#1f1f1f" />
        <rect x="11" y="3" width="22" height="22" rx="1" fill="#f6f6f6" />
        <path d="M11 12h15v13H11z" fill="#b5b5b5" />
      </>
    ),
  },
  {
    name: 'チャット',
    art: (
      <>
        <path d="M19 2a16 16 0 1 1-7 31l-9 2 2-7A16.500 16.500 0 0 1 19 2z" fill="#6462c6" />
        <rect x="9" y="12" width="13" height="13" rx="2" fill="#fff" />
        <path d="M24 16l5-4v13l-5-4z" fill="#fff" />
      </>
    ),
  },
  {
    name: 'エクスプローラー',
    dot: 'gray',
    art: (
      <>
        <path d="M1 3h11l4 4v6H1z" fill="#e0a100" />
        <path d="M1 10h13l3-3h18v27H1z" fill="#fdcb3b" />
        <path d="M6 34v-7q0-4 4-4h16q4 0 4 4v7z" fill="#1173c7" />
        <path d="M12 29h12" stroke="#0a4a8a" strokeWidth="2" />
      </>
    ),
  },
  {
    name: 'Slack',
    dot: 'gray',
    badge: '2',
    art: (
      <>
        <circle cx="18" cy="19" r="17" fill="#fafafa" stroke="#ccc" />
        <g strokeWidth="4.500" strokeLinecap="round">
          <path d="M15 8v1M8 15h7" stroke="#36c5f0" />
          <path d="M21 9v6M27 15h1" stroke="#2eb67d" />
          <path d="M21 29v1M21 22h7" stroke="#ecb22e" />
          <path d="M15 22v7M8 22h1" stroke="#e01e5a" />
        </g>
      </>
    ),
  },
  {
    name: 'Edge',
    art: (
      <>
        <circle cx="18" cy="18" r="17" fill="#1468bf" />
        <path d="M2 14A17 17 0 0 1 35 18c0 6-5 8-9 8-5 0-6-3-4-5 2-7-10-14-20-7z" fill="#35c1a8" />
        <path d="M2 14C10 8 22 12 22 19c-3-5-11-2-10 5 1 6 8 11 16 8A17 17 0 0 1 2 14z" fill="#1f9be0" />
        <path d="M22 21c-2 2-1 5 4 5 3 0 6-1 8-3-2 5-7 8-12 6-4-2-5-8 0-8z" fill="#e3e9f6" />
      </>
    ),
  },
  {
    name: 'Microsoft Store',
    art: (
      <>
        <path d="M11 8V3h14v5" fill="none" stroke="#3fb6f0" strokeWidth="2.500" />
        <path d="M1 7h34v24q0 5-5 5H6q-5 0-5-5z" fill="#1b4679" />
        <path d="M10 13h7v7h-7z" fill="#f25022" />
        <path d="M19 13h7v7h-7z" fill="#7fba00" />
        <path d="M10 21h7v7h-7z" fill="#1ca5ee" />
        <path d="M19 21h7v7h-7z" fill="#ffb900" />
      </>
    ),
  },
  {
    name: '付箋',
    dot: 'gray',
    art: (
      <>
        <path d="M2 3h32v32H2z" fill="#373737" />
        <path d="M19 35V20h15z" fill="#ffd800" />
      </>
    ),
  },
  {
    name: 'Chrome',
    dot: 'gray',
    art: (
      <>
        <circle cx="18" cy="18" r="17" fill="#fcc31e" />
        <path d="M18 18 3.300 9.500A17 17 0 0 1 32.700 9.500z" fill="#e33b2e" />
        <path d="M18 18h-7L3.300 9.500A17 17 0 0 0 18 35l6-13z" fill="#2da94f" />
        <path d="M18 10h15a17 17 0 0 1-15 25l7-13z" fill="#fcc31e" />
        <circle cx="18" cy="18" r="8" fill="#fff" />
        <circle cx="18" cy="18" r="6.500" fill="#1a73e8" />
      </>
    ),
  },
  { name: 'One', text: true },
  {
    name: 'Snipping Tool',
    dot: 'gray',
    art: (
      <>
        <rect x="2" y="1" width="25" height="25" rx="3" fill="#fff" />
        <path d="M22 6H6v16" fill="none" stroke="#d83b01" strokeWidth="4" strokeDasharray="4 2" />
        <path d="M19 10v17M8 21h20" stroke="#9aa0a6" strokeWidth="3" />
        <circle cx="31" cy="21" r="3.500" fill="none" stroke="#1c93e0" strokeWidth="2.500" />
        <circle cx="19" cy="31" r="3.500" fill="none" stroke="#1c93e0" strokeWidth="2.500" />
      </>
    ),
  },
  {
    name: '電卓',
    art: (
      <>
        <rect x="5" y="1" width="27" height="35" rx="2" fill="#6b7680" />
        <path d="M8 4h21v6H8z" fill="#3ccbf4" />
        <path d="M8 13h5v5H8zM16 13h5v5h-5zM24 13h5v5h-5zM8 20h5v5H8zM16 20h5v5h-5zM8 28h5v5H8zM16 28h5v5h-5z" fill="#eee" />
        <path d="M24 20h5v13h-5z" fill="#12427c" />
      </>
    ),
  },
  {
    name: 'Teams',
    art: (
      <>
        <circle cx="21" cy="7" r="5" fill="#7b83eb" />
        <circle cx="31" cy="9" r="4" fill="#5059c9" />
        <path d="M25 14h11v10a6 6 0 0 1-8 6z" fill="#5059c9" />
        <path d="M11 14h18v11a9 9 0 0 1-18 0z" fill="#7b83eb" />
        <rect x="0" y="10" width="19" height="18" rx="1.500" fill="#444bb3" />
        <path d="M5 15h9M9.500 15v9" stroke="#fff" strokeWidth="2.200" />
      </>
    ),
  },
];

const dotColors = { gray: 'bg-[#7b7f8b] w-2', blue: 'bg-[#0078d4] w-6', red: 'bg-[#c42b1c] w-2' };

function TaskbarButton({ label, dot, badge, tile = '', children }) {
  return (
    <button aria-label={label} className="relative w-[66px] h-full flex items-center justify-center">
      <span className={`relative w-[56px] h-[58px] rounded-md flex items-center justify-center ${tile}`}>
        {children}
        {badge && (
          <span className="absolute top-1 right-0.5 w-[22px] h-[22px] rounded-full bg-[#cc1350] border border-[#3d1020] text-white text-base leading-5 text-center">
            {badge}
          </span>
        )}
      </span>
      {dot && <span className={`absolute bottom-1 h-[5px] rounded-full ${dotColors[dot]}`} />}
    </button>
  );
}

function Taskbar() {
  return (
    <footer className="relative h-[72px] shrink-0 flex items-center pb-0.5 bg-linear-to-r from-[#e4eef8] via-[#d3dcf5] to-[#e1ecf8] text-[#1b1b1b]">
      <div className="w-[464px] shrink-0 flex items-center gap-3.5 pl-8">
        <svg width="30" height="30" viewBox="0 0 30 30">
          <defs>
            <linearGradient id="sun" x1="0" y1="0" x2="1" y2="1">
              <stop offset="0" stopColor="#f2bd2c" />
              <stop offset="1" stopColor="#f4600c" />
            </linearGradient>
          </defs>
          <circle cx="15" cy="15" r="15" fill="url(#sun)" />
        </svg>
        <div className="text-[17px] leading-6">
          <div>24°C</div>
          <div className="text-[#636870]">晴れ</div>
        </div>
      </div>
      <button aria-label="スタート" className="w-[66px] flex justify-center">
        <svg width="35" height="35" viewBox="0 0 35 35" fill="#0c86dc">
          <path d="M0 1.500Q0 0 1.500 0h15v17H0z" fill="#35b3f2" />
          <path d="M18 0h15.500Q35 0 35 1.500V17H18z" fill="#1f9ce8" />
          <path d="M0 18h16.500v17h-15Q0 35 0 33.500z" fill="#1590e0" />
          <path d="M18 18h17v15.500q0 1.500-1.500 1.500H18z" fill="#0a78d2" />
        </svg>
      </button>
      <label className="ml-1.5 w-[328px] h-[47px] shrink-0 flex items-center gap-3.5 pl-4 rounded-full bg-[#f4f8fe] border border-b-2 border-[#c2cce2]">
        <Search size={24} strokeWidth={2.500} className="shrink-0" />
        <input aria-label="検索" placeholder="検索" className="w-[240px] text-xl placeholder:text-[#555a62] outline-none" />
      </label>
      <div className="ml-[3px] flex h-full shrink-0">
        {ICONS.map((ic) => (
          <TaskbarButton key={ic.name} label={ic.name} dot={ic.dot} badge={ic.badge}>
            {ic.text ? (
              <span className="font-['Liberation_Serif',serif] italic font-bold text-xl text-[#23304a] [text-shadow:0_0_3px_#fff]">One</span>
            ) : (
              <svg width="36" height="37" viewBox="0 0 36 37">
                {ic.art}
              </svg>
            )}
          </TaskbarButton>
        ))}
        <TaskbarButton label="いい生活デスクトップアプリ" dot="blue" tile="bg-[#edf0f9] border border-[#d8dceb]">
          <span className="bg-white rounded-sm p-1">
            <RingLogo className="w-7 h-[31px]" />
          </span>
        </TaskbarButton>
        <TaskbarButton label="フォルダー" dot="red" tile="bg-[#fbe3e6]">
          <svg width="36" height="37" viewBox="0 0 36 37">
            <path d="M7 3h15q2 0 2 2v28H7z" fill="#fad165" />
            <path d="M7 3l8 4v27l-8-3z" fill="#fde08c" />
            <path d="M14 32a6 6 0 0 1 1-10q4-5 9-1l9 5a4 4 0 0 1-1 6z" fill="#1480d8" />
          </svg>
        </TaskbarButton>
      </div>
      <div className="ml-auto pr-8 flex items-center shrink-0">
        <ChevronUp size={22} />
        <svg width="26" height="18" viewBox="0 0 26 18" className="ml-[24px]">
          <path d="M5 17a5 5 0 0 1 0-10q4-8 12-4l4 5a5 5 0 0 1 0 9z" fill="#1a86dc" />
        </svg>
        <span className="ml-[23px] w-6 text-[22px] leading-7">あ</span>
        <span className="relative ml-[25px]">
          <Wifi size={22} strokeWidth={1.800} />
          <svg width="10" height="12" viewBox="0 0 10 12" className="absolute -left-1 -top-1">
            <path d="M5 0l5 2v4q0 4-5 6-5-2-5-6V2z" fill="#0c62b8" />
            <path d="M5 3v4" stroke="#fff" strokeWidth="1.500" />
          </svg>
        </span>
        <Volume2 size={23} strokeWidth={1.600} className="ml-[13px]" />
        <svg width="25" height="20" viewBox="0 0 25 20" className="ml-[13px]">
          <rect x="3" y="6" width="19" height="12" rx="3" fill="none" stroke="#111" strokeWidth="2" />
          <rect x="6" y="9" width="13" height="6" fill="#111" />
          <path d="M24 10v4" stroke="#111" strokeWidth="2" />
          <path d="M6 0 1 7h3l-1 5 5-7H5z" fill="#111" />
        </svg>
        <div className="w-[116px] text-right text-[17px] leading-6 whitespace-nowrap">
          <div>9:56</div>
          <div>2023/10/03</div>
        </div>
        <svg width="20" height="24" viewBox="0 0 20 24" className="ml-[12px]" fill="#003f92">
          <path d="M10 0q8 0 8 9v6l2 4H0l2-4V9q0-9 8-9z" />
          <path d="M6 21h8q-1 3-4 3t-4-3z" />
        </svg>
      </div>
      {/* callout 3 */}
      <div className="absolute right-[23px] -top-[10px] w-[153px] h-[77px] border-[5px] border-[#fe0000] pl-[23px] pt-[11px] text-[32px] leading-[30px] text-[#fe0000] font-['Liberation_Sans_Narrow','Liberation_Sans',sans-serif] pointer-events-none">
        3.
      </div>
    </footer>
  );
}

export default function App() {
  return (
    <div
      lang="ja"
      className="relative h-screen flex flex-col overflow-hidden bg-[#b0b0b0] font-['Noto_Sans','Noto_Sans_CJK_JP',sans-serif] [font-feature-settings:'palt']"
    >
      <TitleBar />
      <Toolbar />
      <PageTabs />
      <div className="flex-1 min-h-0 flex border-2 border-[#7c949f] rounded-t-md bg-[#9ca7af] p-[3px]">
        <div className="flex-1 min-w-0 flex border-2 border-[#6e8c9b] bg-[#b0b0b0] p-0.5">
          <div className="flex-1 min-w-0 flex gap-[11px] border-2 border-[#929292] pt-0.5 pb-[9px] pl-1 pr-[11px]">
            <Sidebar />
            <MainPanel />
          </div>
        </div>
      </div>
      <Taskbar />
      <AboutDialog />
    </div>
  );
}
